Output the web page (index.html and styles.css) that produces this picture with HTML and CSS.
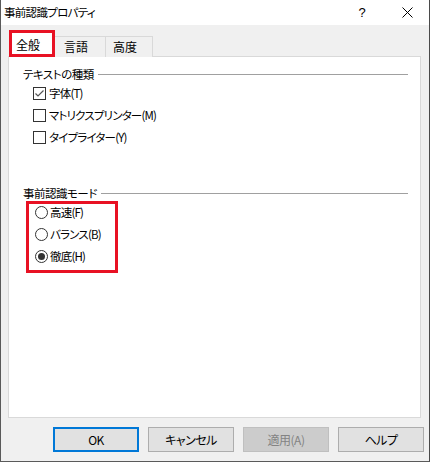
FILE: index.html
```html
<!DOCTYPE html>
<html lang="ja">
<head>
<meta charset="utf-8">
<link rel="stylesheet" href="styles.css">
</head>
<body>
<div class="window">
  <div class="titlebar">
    <span class="title">事前認識プロパティ</span>
    <span class="help-btn">?</span>
    <span class="close-btn"><svg width="11" height="11" viewBox="0 0 11 11"><path d="M0.5 0.5 L10.5 10.5 M10.5 0.5 L0.5 10.5" stroke="#000" stroke-width="1" fill="none"/></svg></span>
  </div>
  <div class="client">
    <div class="tabs">
      <div class="tab selected">全般</div>
      <div class="tab t2">言語</div>
      <div class="tab t3">高度</div>
    </div>
    <div class="panel">
      <div class="group-head"><span class="group-label">テキストの種類</span><span class="group-line"></span></div>
      <div class="opts checks">
        <div class="opt"><span class="cbox"><svg width="11" height="11" viewBox="0 0 11 11"><path d="M1.5 5.5 L4 8 L9.5 2.5" stroke="#555" stroke-width="1.2" fill="none"/></svg></span><span>字体(T)</span></div>
        <div class="opt"><span class="cbox"></span><span>マトリクスプリンター(M)</span></div>
        <div class="opt"><span class="cbox"></span><span>タイプライター(Y)</span></div>
      </div>
      <div class="group-head g2"><span class="group-label">事前認識モード</span><span class="group-line"></span></div>
      <div class="opts radios">
        <div class="opt"><span class="radio"></span><span>高速(F)</span></div>
        <div class="opt"><span class="radio"></span><span>バランス(B)</span></div>
        <div class="opt"><span class="radio on"></span><span>徹底(H)</span></div>
      </div>
    </div>
    <div class="buttons">
      <div class="btn default">OK</div>
      <div class="btn">キャンセル</div>
      <div class="btn disabled">適用(A)</div>
      <div class="btn">ヘルプ</div>
    </div>
  </div>
</div>
</body>
</html>
```

FILE: styles.css
```css
html, body {
  margin: 0;
  padding: 0;
  background: #ffffff;
}
body {
  font-family: "Noto Sans CJK JP", "Noto Sans", sans-serif;
  font-size: 12px;
  color: #000;
  font-feature-settings: "palt" 1;
}
.window {
  width: 430px;
  height: 462px;
  box-sizing: border-box;
  border-left: 1px solid #5a5a5a;
  border-right: 1px solid #4a4a4a;
  border-bottom: 1px solid #5a5a5a;
  display: flex;
  flex-direction: column;
}
.titlebar {
  height: 25px;
  flex: none;
  background: #fff;
  display: flex;
  align-items: center;
  position: relative;
}
.title {
  padding-left: 3px;
  font-size: 11.5px;
  letter-spacing: -0.7px;
  line-height: 14px;
  margin-top: -1px;
}
.help-btn {
  margin-left: auto;
  width: 12px;
  text-align: center;
  font-family: "Liberation Sans", sans-serif;
  font-size: 13px;
  margin-top: -1px;
}
.close-btn {
  margin-left: 34px;
  margin-right: 16px;
  display: flex;
  margin-top: -1px;
}
.client {
  flex: 1;
  background: #f0f0f0;
  display: flex;
  flex-direction: column;
}
.tabs {
  display: flex;
  align-items: flex-end;
  margin-top: 5px;
  padding-left: 8px;
  height: 27px;
  margin-bottom: -1px;
  position: relative;
  z-index: 1;
}
.tab {
  box-sizing: border-box;
  height: 21px;
  border: 1px solid #d9d9d9;
  border-bottom: none;
  background: #f0f0f0;
  line-height: 16px;
  padding-top: 2px;
}
.tab.selected {
  height: 27px;
  width: 46px;
  border: 3px solid #e81123;
  background: #fff;
  padding-left: 4px;
  padding-top: 4px;
}
.tab.t2 {
  width: 51px;
  padding-left: 9px;
  border-left: none;
}
.tab.t3 {
  width: 47px;
  padding-left: 7px;
  border-left: none;
}
.panel {
  margin-left: 7px;
  width: 413px;
  height: 362px;
  box-sizing: border-box;
  border: 1px solid #d9d9d9;
  background: #fff;
  padding-top: 9px;
  flex: none;
}
.group-head {
  display: flex;
  align-items: center;
  height: 16px;
  padding-left: 14px;
  padding-right: 12px;
}
.group-head.g2 {
  margin-top: 37px;
}
.group-label {
  line-height: 16px;
  font-size: 11.5px;
  letter-spacing: -0.5px;
}
.group-line {
  flex: 1;
  height: 1px;
  background: #a0a0a0;
  margin-left: 4px;
  margin-top: 1px;
}
.opts {
  display: flex;
  flex-direction: column;
}
.opt {
  height: 22px;
  display: flex;
  align-items: center;
  line-height: 16px;
  font-size: 11.5px;
  letter-spacing: -0.8px;
}
.checks .opt {
  padding-left: 24px;
}
.cbox {
  width: 13px;
  height: 13px;
  box-sizing: border-box;
  border: 1px solid #333;
  background: #fff;
  margin-right: 3px;
  display: flex;
  align-items: center;
  justify-content: center;
  flex: none;
}
.radios {
  position: relative;
}
.radios::after {
  content: "";
  position: absolute;
  left: 17px;
  top: 0;
  width: 92px;
  height: 72px;
  box-sizing: border-box;
  border: 3px solid #e81123;
}
.radios .opt {
  padding-left: 26px;
}
.radio {
  width: 13px;
  height: 13px;
  box-sizing: border-box;
  border: 1px solid #333;
  border-radius: 50%;
  background: #fff;
  margin-right: 2px;
  display: flex;
  align-items: center;
  justify-content: center;
  flex: none;
}
.radio.on::before {
  content: "";
  width: 7px;
  height: 7px;
  border-radius: 50%;
  background: #333;
}
.buttons {
  display: flex;
  gap: 9px;
  padding-left: 52px;
  margin-top: 9px;
}
.btn {
  width: 86px;
  height: 25px;
  box-sizing: border-box;
  border: 1px solid #adadad;
  background: #e1e1e1;
  display: flex;
  align-items: center;
  justify-content: center;
  line-height: 16px;
  letter-spacing: -0.5px;
}
.btn.default {
  border: 2px solid #0078d7;
}
.btn.disabled {
  background: #cccccc;
  border-color: #bfbfbf;
  color: #838383;
}
```
